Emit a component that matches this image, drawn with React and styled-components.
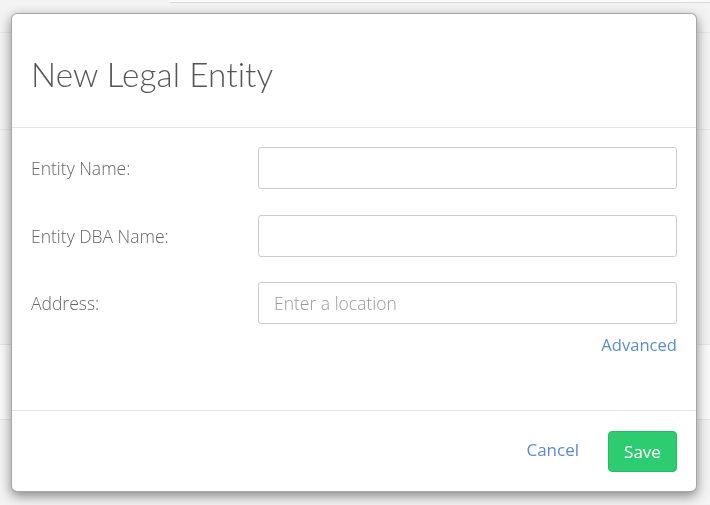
import React from "react";
import styled, { createGlobalStyle } from "styled-components";

const Global = createGlobalStyle`
  html, body { margin: 0; padding: 0; }
  body {
    background: #f3f3f3;
    font-family: "Open Sans", "Liberation Sans", sans-serif;
    width: 710px;
    height: 505px;
    overflow: hidden;
  }
  * { box-sizing: border-box; }
`;

const Backdrop = styled.div`
  width: 710px;
  height: 505px;
  display: flex;
  flex-direction: column;
`;

const BackTopBar = styled.div`
  height: 3px;
  margin-left: 170px;
  background: #fafafa;
  border-bottom: 1px solid #d8d8d8;
`;

const BackRow = styled.div`
  height: ${(p) => p.$h}px;
  border-bottom: 1px solid #e6e6e6;
  background: ${(p) => (p.$white ? "#f9f9f9" : "transparent")};
`;

const Modal = styled.div`
  position: fixed;
  left: 11px;
  top: 13px;
  width: 686px;
  height: 479px;
  background: #fff;
  border: 1px solid rgba(0, 0, 0, 0.35);
  border-radius: 6px;
  box-shadow: 0 4px 12px rgba(0, 0, 0, 0.45);
  display: flex;
  flex-direction: column;
`;

const Header = styled.div`
  height: 114px;
  padding: 6px 19px 0 19px;
  display: flex;
  align-items: center;
  border-bottom: 1px solid #e5e5e5;
`;

const Title = styled.h1`
  margin: 0;
  font-family: Lato, "Open Sans", sans-serif;
  font-weight: 300;
  font-size: 33.2px;
  color: #555;
  letter-spacing: 0.1px;
`;

const Body = styled.div`
  flex: 1;
  padding: 19px 19px 0 19px;
  display: flex;
  flex-direction: column;
  gap: 25.5px;
  border-bottom: 1px solid #e5e5e5;
`;

const Row = styled.div`
  display: grid;
  grid-template-columns: 227px 1fr;
  align-items: center;
`;

const Label = styled.label`
  font-size: 17.5px;
  font-weight: 300;
  color: #666;
`;

const Input = styled.input`
  height: 42px;
  width: 100%;
  border: 1px solid #cccccc;
  border-radius: 3px;
  padding: 0 15px;
  font-family: "Open Sans", sans-serif;
  font-size: 17.5px;
  font-weight: 300;
  color: #555;
  outline: none;
  &::placeholder { color: #999; }
`;

const LinkRow = styled.div`
  display: flex;
  justify-content: flex-end;
  margin-top: -17px;
`;

const Link = styled.a`
  font-size: 16.6px;
  font-weight: 400;
  color: #5b8ccf;
  text-decoration: none;
  cursor: pointer;
`;

const Footer = styled.div`
  height: 80px;
  padding: 0 19px;
  display: flex;
  align-items: center;
  justify-content: flex-end;
  gap: 29px;
`;

const SaveButton = styled.button`
  height: 41px;
  width: 69px;
  border: 1px solid #29b865;
  border-radius: 4px;
  background: #2ecc71;
  color: #fff;
  font-family: "Open Sans", sans-serif;
  font-size: 17px;
  font-weight: 400;
  cursor: pointer;
  padding: 0;
  margin-top: 1px;
`;

const CancelLink = styled(Link)`
  font-size: 17px;
  margin-top: -3px;
`;

export default function App() {
  return (
    <>
      <Global />
      <Backdrop>
        <BackTopBar />
        <BackRow $h={30} />
        <BackRow $h={97} />
        <BackRow $h={215} />
        <BackRow $h={75} $white />
      </Backdrop>
      <Modal>
        <Header>
          <Title>New Legal Entity</Title>
        </Header>
        <Body>
          <Row>
            <Label>Entity Name:</Label>
            <Input type="text" />
          </Row>
          <Row>
            <Label>Entity DBA Name:</Label>
            <Input type="text" />
          </Row>
          <Row>
            <Label>Address:</Label>
            <Input type="text" placeholder="Enter a location" />
          </Row>
          <LinkRow>
            <Link>Advanced</Link>
          </LinkRow>
        </Body>
        <Footer>
          <CancelLink>Cancel</CancelLink>
          <SaveButton>Save</SaveButton>
        </Footer>
      </Modal>
    </>
  );
}
